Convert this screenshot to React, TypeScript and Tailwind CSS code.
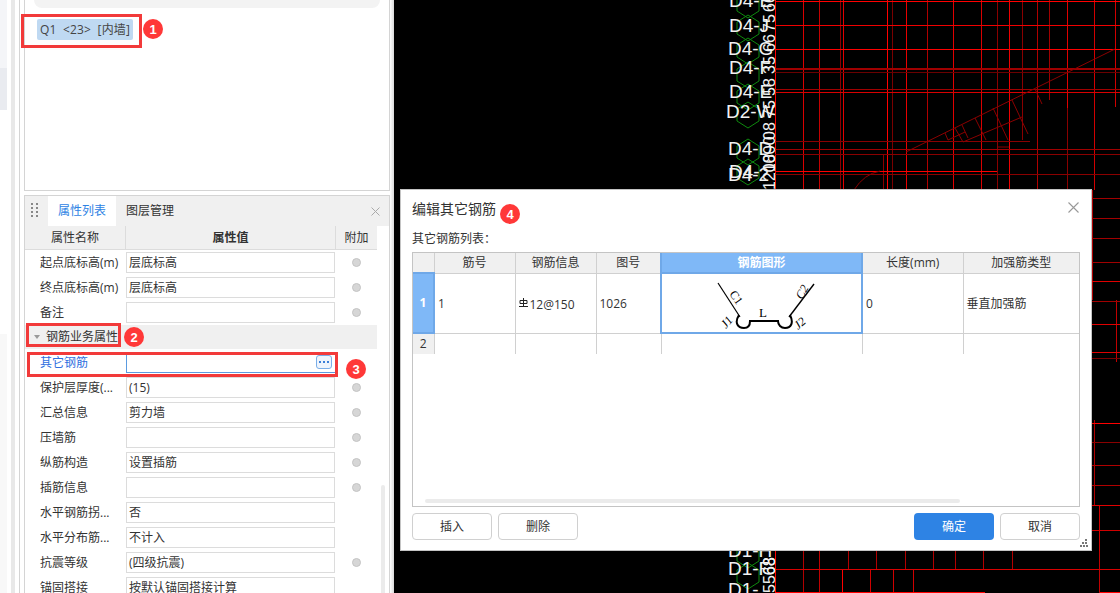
import React from 'react';

interface PropRow {
  label: string;
  value?: string;
  radio?: boolean;
}

const rowsTop: PropRow[] = [
  { label: '起点底标高(m)', value: '层底标高', radio: true },
  { label: '终点底标高(m)', value: '层底标高', radio: true },
  { label: '备注', radio: true },
];

const rowsBottom: PropRow[] = [
  { label: '保护层厚度(...', value: '(15)', radio: true },
  { label: '汇总信息', value: '剪力墙', radio: true },
  { label: '压墙筋', radio: true },
  { label: '纵筋构造', value: '设置插筋', radio: true },
  { label: '插筋信息', radio: true },
  { label: '水平钢筋拐...', value: '否' },
  { label: '水平分布筋...', value: '不计入' },
  { label: '抗震等级', value: '(四级抗震)', radio: true },
  { label: '锚固搭接', value: '按默认锚固搭接计算' },
];

const Badge: React.FC<{ n: number; className?: string }> = ({ n, className = '' }) => (
  <span
    className={`flex h-[20px] w-[20px] items-center justify-center rounded-full bg-[#ff3838] font-['Liberation_Sans',sans-serif] text-[13px] font-bold leading-none text-white ${className}`}
  >
    {n}
  </span>
);

const Row: React.FC<{ row: PropRow }> = ({ row }) => (
  <div className="flex h-[25px] items-center">
    <div className="w-[101px] shrink-0 whitespace-nowrap pl-[15px] text-[#333]">{row.label}</div>
    <div className="flex h-[21px] w-[209px] shrink-0 items-center border border-[#dcdcdc] pl-[2px] text-[#333]">
      {row.value}
    </div>
    <div className="flex w-[43px] shrink-0 justify-center">
      {row.radio && <span className="h-[9px] w-[9px] rounded-full border border-[#c4c4c4] bg-[#d6d6d6]" />}
    </div>
  </div>
);

const V_LINES: [number, number, number, string][] = [
  [775, 0, 190, '#ff0000'], [803, 0, 190, '#d80000'], [819, 0, 190, '#c40000'], [840, 0, 190, '#8a0000'],
  [843, 0, 190, '#e00000'], [887, 0, 190, '#ff0000'], [892, 0, 190, '#7a0000'], [906, 0, 190, '#e80000'],
  [927, 0, 190, '#b00000'], [953, 0, 190, '#e00000'], [981, 0, 190, '#d80000'], [997, 0, 190, '#8a0000'],
  [1009, 0, 190, '#f00000'], [1022, 0, 140, '#8a0000'], [1037, 0, 190, '#b00000'], [1049, 0, 100, '#a00000'],
  [1067, 0, 108, '#e00000'], [1067, 108, 190, '#8a0000'], [1094, 0, 190, '#d00000'], [1115, 0, 107, '#d00000'], [883, 155, 190, '#8a0000'],
  [1092, 190, 300, '#b00000'], [1116, 300, 362, '#c00000'], [1094, 420, 505, '#b00000'], [1099, 505, 577, '#d00000'],
  [775, 551, 593, '#ff0000'], [803, 551, 593, '#b00000'], [819, 551, 593, '#c00000'], [842, 569, 593, '#ff0000'],
  [848, 551, 569, '#b00000'], [870, 569, 593, '#d00000'], [876, 551, 569, '#b00000'], [893, 569, 593, '#d00000'],
  [905, 551, 569, '#b00000'], [913, 569, 593, '#d00000'], [933, 551, 569, '#b00000'], [955, 551, 569, '#b00000'],
  [983, 551, 569, '#b00000'], [1012, 551, 569, '#b00000'], [1099, 551, 593, '#c00000'],
];

const H_LINES: [number, number, number, string][] = [
  [1, 775, 1120, '#ff0000'], [25, 775, 1120, '#f00000'], [49, 775, 1120, '#ff0000'], [68, 775, 1120, '#a00000'],
  [69, 775, 1120, '#a00000'], [72, 775, 1120, '#6a0000'], [89, 775, 1120, '#a00000'], [92, 775, 1120, '#d80000'],
  [141, 775, 1030, '#8a0000'], [149, 775, 1120, '#a00000'], [154, 775, 1120, '#8a0000'], [171, 775, 997, '#ff0000'],
  [174, 775, 1120, '#8a0000'], [198, 1091, 1120, '#a00000'], [218, 1091, 1120, '#a00000'], [238, 1091, 1120, '#a00000'],
  [262, 1091, 1120, '#a00000'], [281, 1091, 1120, '#e00000'], [301, 1091, 1120, '#a00000'], [324, 1091, 1120, '#e00000'],
  [352, 1091, 1120, '#e00000'], [358, 1091, 1120, '#7a0000'], [423, 1091, 1120, '#ff0000'], [442, 1091, 1120, '#8a0000'],
  [465, 1091, 1120, '#b00000'], [485, 1091, 1120, '#b00000'], [505, 1091, 1120, '#e00000'], [530, 1091, 1120, '#d00000'],
  [569, 775, 1120, '#d80000'], [592, 775, 985, '#ff0000'], [592, 1100, 1120, '#ff0000'],
];

const LABELS: [string, number, number][] = [
  ['D4-E', 729, 7], ['D4-J', 729, 32], ['D4-G', 728, 55], ['D4-F', 729, 74], ['D4-E', 729, 98], ['D2-W', 726, 118],
  ['D4-D', 728, 155], ['D4-', 729, 178], ['D4-2', 728, 181],
  ['D1-H', 728, 557], ['D1-F', 728, 575], ['D1-', 728, 596],
];

const NUMBERS: [string, number][] = [
  ['66', 12], ['75', 32], ['66', 52], ['35', 74], ['58', 96], ['75', 118], ['08', 140], ['1800', 172], ['1200', 190],
  ['68', 575], ['5568', 593],
];

const CadView: React.FC = () => (
  <svg className="block h-[593px] flex-1" viewBox="394 0 726 593">
    <rect x="394" y="0" width="726" height="593" fill="#000" />
    {V_LINES.map(([x, a, b, c], i) => (
      <line key={i} x1={x + 0.5} x2={x + 0.5} y1={a} y2={b} stroke={c} strokeWidth="1" />
    ))}
    {H_LINES.map(([y, a, b, c], i) => (
      <line key={i} y1={y + 0.5} y2={y + 0.5} x1={a} x2={b} stroke={c} strokeWidth="1" />
    ))}
    <g stroke="#8a0000" strokeWidth="1" fill="none">
      <path d="M906 152 L1115 49" />
      <path d="M963 142 L1022 117" />
      <path d="M945 133 L948 140 L965 132 M955 128 L963 142 M962 125 L968 138 M975 118 L986 140 M993 108 L1008 140 M1012 100 L1028 134 M1035 89 L1042 104" />
      <path d="M997 147 H1009" />
      <path d="M854 190 Q864 174 880 171" />
    </g>
    <g stroke="#0e8a0e" strokeWidth="1" fill="none">
      {[5, 28, 51, 75, 97, 115, 152, 172, 555, 576].map((y) => (
        <path key={y} d={`M748 ${y - 13} L759 ${y - 6} L759 ${y + 6} L748 ${y + 13} L737 ${y + 6} L737 ${y - 6} Z`} />
      ))}
    </g>
    <g fill="#f2f2f2" fontFamily="'Liberation Sans', sans-serif" fontSize="19">
      {LABELS.map(([t, x, y], i) => (
        <text key={i} x={x} y={y}>
          {t}
        </text>
      ))}
    </g>
    <g fill="#f2f2f2" fontFamily="'Liberation Sans', sans-serif" fontSize="16">
      {NUMBERS.map(([t, y], i) => (
        <text key={i} transform={`translate(775 ${y}) rotate(-90)`}>
          {t}
        </text>
      ))}
    </g>
  </svg>
);

const RebarShape: React.FC = () => (
  <svg className="mx-auto block" width="197" height="56" viewBox="2 2 197 56">
    <g fill="none" stroke="#000">
      <path d="M57 10 L79 44" strokeWidth="1.2" />
      <path d="M153 11 L128 44" strokeWidth="1.4" />
      <path d="M78 42 C73 50 77 55 83 55 C87 55 89 52 89 48 L117 48 C117 52 120 55 124 55 C130 55 133 50 129 42" strokeWidth="2" />
    </g>
    <g fill="#000" fontFamily="'Liberation Serif', serif" fontSize="12">
      <text x="102" y="44" textAnchor="middle" fontSize="13">L</text>
      <text transform="translate(68 21) rotate(55)">C1</text>
      <text transform="translate(141 27) rotate(-60)" fontStyle="italic">C2</text>
      <text transform="translate(65 56) rotate(-50)" fontStyle="italic">J1</text>
      <text transform="translate(137 57) rotate(-40)" fontStyle="italic">J2</text>
    </g>
  </svg>
);

const RebarGlyph: React.FC = () => (
  <svg className="mr-[2px] inline-block align-[2px]" width="9" height="9" viewBox="0 0 9 9">
    <path d="M4.5 0 V8 M1 2.5 H8 V5.5 H1 Z M0 8.5 H9" fill="none" stroke="#222" strokeWidth="1" />
  </svg>
);

const DialogButton: React.FC<{ label: string; primary?: boolean }> = ({ label, primary }) => (
  <button
    className={`h-[27px] w-[80px] rounded-[4px] text-[12px] ${
      primary ? 'bg-[#2e83e4] text-white' : 'border border-[#d0d0d0] bg-white text-[#333]'
    }`}
  >
    {label}
  </button>
);

const OtherRebarDialog: React.FC = () => {
  const th = 'h-[20px] border border-[#d0d0d0] bg-[#f0f0f0] p-0 text-center font-normal text-[#333]';
  const td = 'border border-[#d0d0d0] px-[3px] pt-[2px] text-[#333]';
  return (
    <div className="absolute left-[400px] top-[189px] flex h-[362px] w-[692px] flex-col border border-[#c4c4c4] bg-white px-[11px] pb-[10px]">
      <div className="flex h-[35px] shrink-0 items-center justify-between pt-[3px]">
        <div className="flex items-center">
          <span className="text-[14px] text-[#333]">编辑其它钢筋</span>
          <Badge n={4} className="ml-[4px] mt-[10px]" />
        </div>
        <svg className="mr-[1px] -mt-[3px]" width="11" height="11" viewBox="0 0 11 11">
          <path d="M0.5 0.5 L10.5 10.5 M10.5 0.5 L0.5 10.5" stroke="#999" strokeWidth="1.1" />
        </svg>
      </div>
      <div className="mt-[8px] h-[19px] shrink-0 text-[#333]">其它钢筋列表：</div>
      <div className="relative h-[255px] shrink-0 border border-[#c4c4c4]">
        <table className="w-full table-fixed border-collapse border-hidden">
          <colgroup>
            <col className="w-[21px]" />
            <col className="w-[81px]" />
            <col className="w-[81px]" />
            <col className="w-[65px]" />
            <col className="w-[201px]" />
            <col className="w-[101px]" />
            <col />
          </colgroup>
          <thead>
            <tr>
              <th className={th} />
              <th className={th}>筋号</th>
              <th className={th}>钢筋信息</th>
              <th className={th}>图号</th>
              <th className="h-[20px] border-2 border-[#6fa8e8] bg-[#7fb8f7] p-0 text-center font-bold text-white">钢筋图形</th>
              <th className={th}>长度(mm)</th>
              <th className={th}>加强筋类型</th>
            </tr>
          </thead>
          <tbody>
            <tr className="h-[60px]">
              <td className="border-2 border-[#6fa8e8] bg-[#7fb8f7] p-0 text-center font-bold text-white">1</td>
              <td className={td}>1</td>
              <td className={td}>
                <RebarGlyph />
                12@150
              </td>
              <td className={td}>1026</td>
              <td className="border-2 border-[#6fa8e8] p-0">
                <RebarShape />
              </td>
              <td className={td}>0</td>
              <td className={td}>垂直加强筋</td>
            </tr>
            <tr className="h-[21px]">
              <td className="border border-[#d0d0d0] bg-[#f0f0f0] p-0 text-center text-[#333]">2</td>
              <td className={td} />
              <td className={td} />
              <td className={td} />
              <td className={td} />
              <td className={td} />
              <td className={td} />
            </tr>
          </tbody>
        </table>
        <div className="absolute bottom-[3px] left-[12px] h-[4px] w-[535px] rounded-full bg-[#ebebeb]" />
      </div>
      <div className="mt-[6px] flex items-start">
        <DialogButton label="插入" />
        <div className="ml-[6px]">
          <DialogButton label="删除" />
        </div>
        <div className="ml-auto">
          <DialogButton label="确定" primary />
        </div>
        <div className="ml-[6px]">
          <DialogButton label="取消" />
        </div>
      </div>
      <svg className="absolute bottom-[3px] right-[3px]" width="8" height="8" viewBox="0 0 8 8" fill="#777">
        <rect x="5" y="0" width="2" height="2" />
        <rect x="2" y="3" width="2" height="2" />
        <rect x="5" y="3" width="2" height="2" />
        <rect x="0" y="6" width="2" height="2" />
        <rect x="3" y="6" width="2" height="2" />
        <rect x="6" y="6" width="2" height="2" />
      </svg>
    </div>
  );
};

const PropertyPanel: React.FC = () => (
  <div className="relative mt-[4px] flex-1 overflow-hidden border-x border-t border-[#d4d4d4]">
    <div className="flex h-[30px] items-stretch bg-[#f0f0f0]">
      <div className="flex w-[23px] items-center pl-[6px]">
        <div className="grid grid-cols-[2px_2px] gap-x-[3px] gap-y-[2px] pb-[2px]">
          {[0, 1, 2, 3, 4, 5, 6, 7].map((i) => (
            <span key={i} className="h-[2px] w-[2px] bg-[#888]" />
          ))}
        </div>
      </div>
      <div className="flex w-[68px] items-center justify-center bg-white text-[#2e83e4]">属性列表</div>
      <div className="flex w-[68px] items-center justify-center text-[#333]">图层管理</div>
      <svg className="ml-auto mr-[9px] mt-[11px]" width="9" height="9" viewBox="0 0 9 9">
        <path d="M0.5 0.5 L8.5 8.5 M8.5 0.5 L0.5 8.5" stroke="#aaa" strokeWidth="1" />
      </svg>
    </div>
    <div className="flex h-[24px] w-[352px] border-b border-[#dcdcdc] bg-[#f0f0f0] text-[#333]">
      <div className="flex w-[101px] items-center justify-center border-r border-[#dcdcdc]">属性名称</div>
      <div className="flex w-[210px] items-center justify-center border-r border-[#dcdcdc] font-bold">属性值</div>
      <div className="flex flex-1 items-center justify-center">附加</div>
    </div>
    {rowsTop.map((r) => (
      <Row key={r.label} row={r} />
    ))}
    <div className="flex h-[24px] w-[352px] items-center bg-[#f0f0f0] text-[#333]">
      <span className="ml-[9px] mr-[6px] h-0 w-0 border-x-[3px] border-t-[4px] border-x-transparent border-t-[#999]" />
      钢筋业务属性
    </div>
    <div className="flex h-[26px] items-center pt-[1px]">
      <div className="w-[101px] shrink-0 pl-[15px] text-[#2f6fe0]">其它钢筋</div>
      <div className="flex h-[21px] w-[209px] shrink-0 items-center justify-end border-b border-l border-[#5b9be0] pr-[3px]">
        <span className="flex h-[14px] w-[16px] items-center justify-center gap-[2px] rounded-[3px] border border-[#7aaee8] bg-[#eef4fc]">
          <i className="h-[2px] w-[2px] bg-[#3b7fd8]" />
          <i className="h-[2px] w-[2px] bg-[#3b7fd8]" />
          <i className="h-[2px] w-[2px] bg-[#3b7fd8]" />
        </span>
      </div>
    </div>
    {rowsBottom.map((r) => (
      <Row key={r.label} row={r} />
    ))}
    <div className="absolute right-[4px] top-[289px] h-[120px] w-[4px] rounded-t-sm bg-[#ebebeb]" />
  </div>
);

const App: React.FC = () => (
  <div className="relative flex h-[593px] w-[1120px] overflow-hidden bg-black font-['Open_Sans','Noto_Sans_CJK_SC',sans-serif] text-[12px] leading-none">
    <aside className="flex h-full w-[394px] shrink-0 bg-white">
      <div className="flex w-[7px] shrink-0 flex-col">
        <div className="h-[68px] bg-[#f4f5f8]" />
        <div className="h-[42px] bg-[#e9ebf0]" />
        <div className="h-[224px] bg-white" />
        <div className="flex-1 bg-[#f8f8f8]" />
      </div>
      <div className="w-[4px] shrink-0" />
      <div className="w-[4px] shrink-0 bg-[#e8e8e8]" />
      <div className="w-[4px] shrink-0" />
      <div className="w-[5px] shrink-0 border-l border-[#d4d4d4]" />
      <div className="flex w-[366px] shrink-0 flex-col">
        <div className="h-[191px] shrink-0 border-x border-b border-[#d4d4d4]">
          <div className="mx-[9px] h-[8px] overflow-hidden rounded-b-xl bg-[#f3f3f3]" />
          <div className="ml-[12px] mt-[11px] inline-flex h-[21px] items-center whitespace-pre rounded-[2px] bg-[#bfd9f2] px-[3px] tracking-[0.15px] text-[#444]">
            {'Q1  <23>  [内墙]'}
          </div>
        </div>
        <PropertyPanel />
      </div>
      <div className="flex-1 bg-gradient-to-r from-white to-[#d8d8d8]" />
    </aside>
    <CadView />
    <OtherRebarDialog />

    <div className="absolute left-[21px] top-[14px] h-[34px] w-[121px] border-[3px] border-[#f23a3a]" />
    <Badge n={1} className="absolute left-[143px] top-[19px]" />
    <div className="absolute left-[26px] top-[323px] h-[24px] w-[95px] border-[3px] border-[#f23a3a]" />
    <Badge n={2} className="absolute left-[124px] top-[327px]" />
    <div className="absolute left-[27px] top-[352px] h-[25px] w-[311px] border-[3px] border-[#f23a3a]" />
    <Badge n={3} className="absolute left-[346px] top-[359px]" />
  </div>
);

export default App;
